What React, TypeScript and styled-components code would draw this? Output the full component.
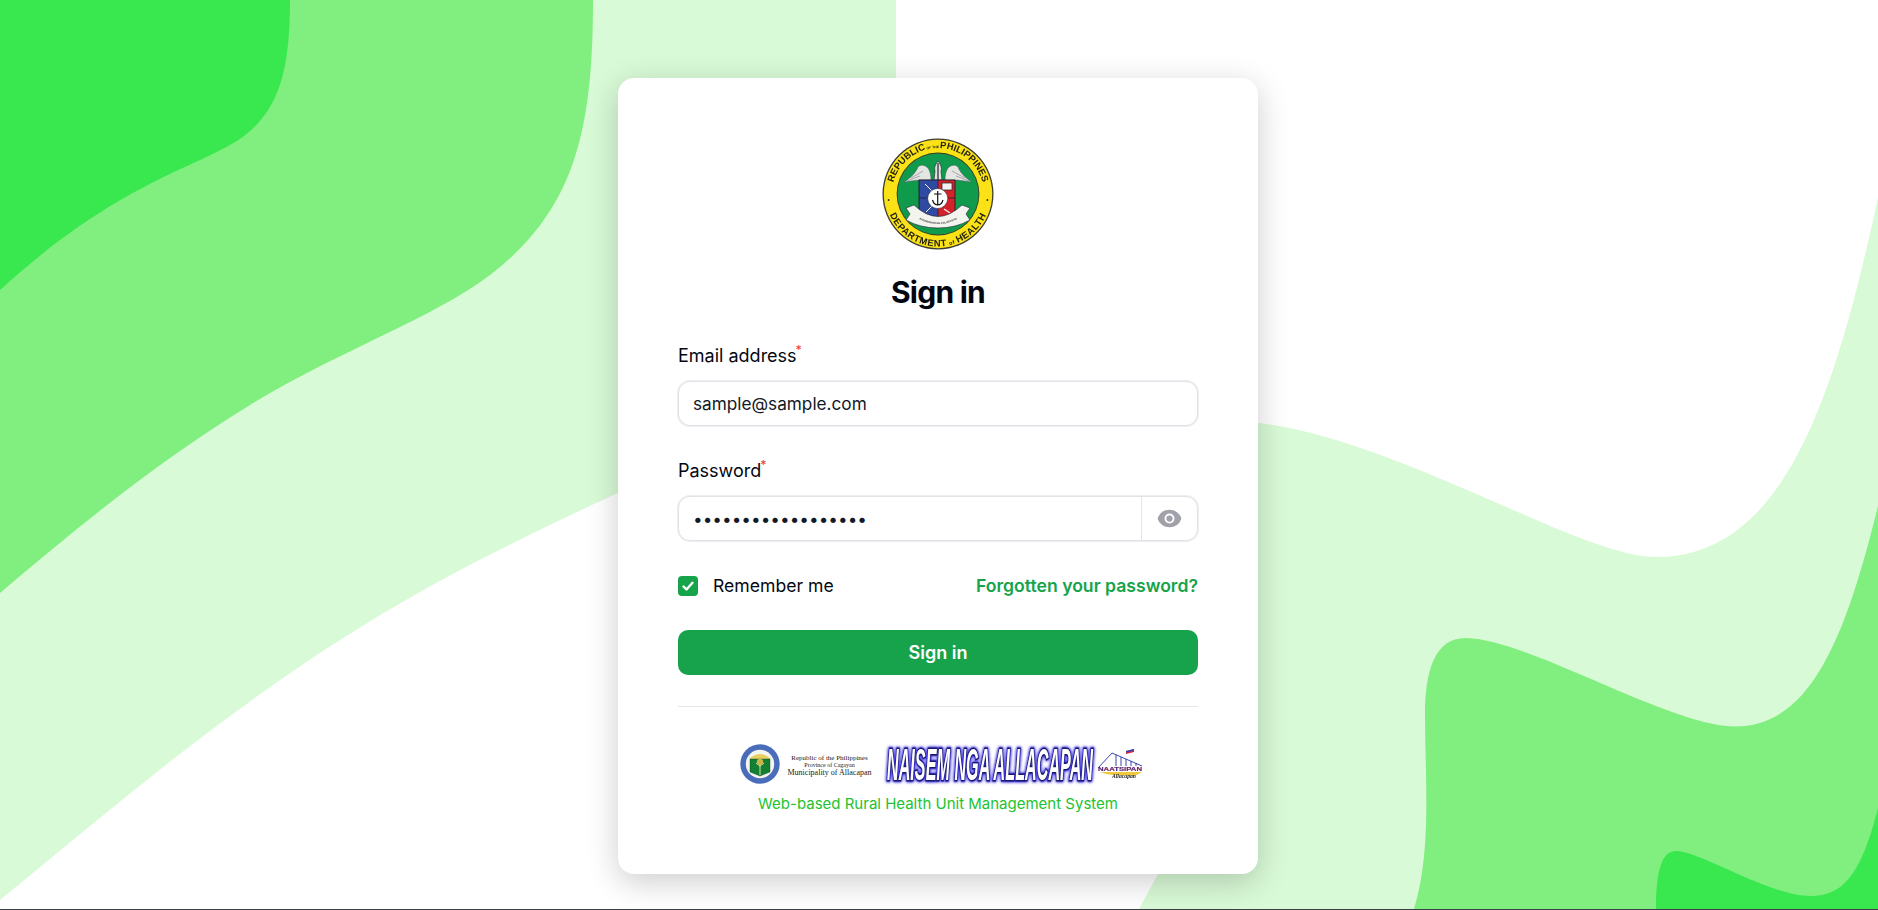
import React from "react";
import styled, { createGlobalStyle } from "styled-components";

const Global = createGlobalStyle`
  html, body { margin: 0; padding: 0; background: #fff; }
  body { font-family: "Inter", "Liberation Sans", sans-serif; color: #030712; }
  * { box-sizing: border-box; }
`;

const Page = styled.div`
  position: relative;
  width: 100%;
  height: 910px;
  overflow: hidden;
  background: #fff;
  border-bottom: 1px solid #3a3f47;
  display: flex;
  justify-content: center;
  align-items: flex-start;
  padding: 78px 2px 0 0;
`;

const Waves = styled.svg`
  position: absolute;
  left: 0;
  top: 0;
  width: 1878px;
  height: 909px;
`;

const Card = styled.form`
  position: relative;
  width: 640px;
  background: #fff;
  border-radius: 16px;
  padding: 60px;
  box-shadow: 0 8px 32px rgba(0, 0, 0, 0.2);
  display: flex;
  flex-direction: column;
`;

const SealBox = styled.svg`
  display: block;
  width: 112px;
  height: 112px;
  margin: 0 auto;
  filter: blur(0.25px);
`;

const Title = styled.h1`
  margin: 24px 0 31.5px;
  font-size: 30px;
  line-height: 36px;
  font-weight: 700;
  letter-spacing: -0.75px;
  text-align: center;
  color: #030712;
`;

const Field = styled.div`
  display: flex;
  flex-direction: column;
  gap: 11.5px;
  margin-bottom: 30.5px;
`;

const Label = styled.label`
  font-size: 18px;
  line-height: 28px;
  font-weight: 400;
  color: #030712;
`;

const Required = styled.sup`
  color: #ef4444;
  font-size: 12px;
  font-weight: 500;
  line-height: 0;
  margin-left: -1px;
  vertical-align: 8px;
`;

const InputBox = styled.div`
  display: flex;
  align-items: stretch;
  height: 45px;
  background: #fff;
  border: 1px solid #e1e3e7;
  box-shadow: 0 0 0 1px #eceef1;
  border-radius: 12px;
  overflow: hidden;
`;

const Input = styled.input`
  flex: 1;
  min-width: 0;
  border: 0;
  outline: 0;
  background: transparent;
  padding: 0 14px;
  font-family: "Inter", "Liberation Sans", sans-serif;
  font-size: 17.2px;
  color: #111827;
`;

const EyeCell = styled.div`
  width: 56px;
  display: flex;
  align-items: center;
  justify-content: center;
  border-left: 1px solid #e3e5e9;
  color: #a1a1aa;
`;

const OptionsRow = styled.div`
  display: flex;
  align-items: center;
  justify-content: space-between;
  margin: 0 0 30px;
  height: 28px;
`;

const Remember = styled.label`
  display: flex;
  align-items: center;
  gap: 15px;
  font-size: 17.6px;
  line-height: 28px;
  color: #030712;
`;

const Check = styled.span`
  width: 20px;
  height: 20px;
  border-radius: 4px;
  background: #16a34a;
  display: flex;
  align-items: center;
  justify-content: center;
`;

const Forgot = styled.a`
  font-size: 17.6px;
  line-height: 28px;
  font-weight: 600;
  color: #16a34a;
  text-decoration: none;
`;

const Submit = styled.button`
  height: 45px;
  width: 100%;
  border: 0;
  border-radius: 10px;
  background: #17a34c;
  color: #fff;
  font-family: "Inter", "Liberation Sans", sans-serif;
  font-size: 18px;
  font-weight: 600;
`;

const Divider = styled.hr`
  width: 100%;
  height: 1px;
  border: 0;
  margin: 31px 0 37px;
  background: #e5e7eb;
`;

const LogoStrip = styled.div`
  display: flex;
  align-items: center;
  justify-content: center;
  padding-left: 7px;
  height: 40px;
`;

const SmallSeal = styled.svg`
  display: block;
  width: 40px;
  height: 40px;
  margin-right: 8px;
  filter: blur(0.3px);
`;

const Municipal = styled.div`
  width: 84px;
  display: flex;
  flex-direction: column;
  align-items: center;
  margin-right: 12px;
  padding-top: 4px;
  font-family: "Liberation Serif", serif;
  color: #222;
`;

const MunicipalLine = styled.span<{ $size: number }>`
  font-size: ${(p) => p.$size}px;
  line-height: 7px;
  white-space: nowrap;
`;

const Naisem = styled.svg`
  display: block;
  width: 212px;
  height: 40px;
  overflow: visible;
  filter: drop-shadow(0 0 1.5px #3b30e0) drop-shadow(0 0 1px #3b30e0);
`;

const Bridge = styled.svg`
  display: block;
  width: 48px;
  height: 40px;
  filter: blur(0.2px);
`;

const Tagline = styled.p`
  margin: 9px 0 0;
  font-family: "Inter", "Open Sans", sans-serif;
  font-size: 15px;
  line-height: 21px;
  text-align: center;
  white-space: nowrap;
  color: #22c32e;
`;

const LIGHT = "#d9fad6";
const MID = "#80ef7f";
const DARK = "#38e84e";

const leftLight = "M0 0L896 0L896 250L700 455L618 493C440 575 340 630 172 760C115 805 55 855 0 900Z";
const leftMid = "M0 0L593 0C593 130 575 210 490 275C430 320 340 350 250 405C160 460 80 525 0 593Z";
const leftDark = "M0 0L290 0C290 75 278 118 230 145C182 172 110 190 0 290Z";

const rightLight = "M1878 198C1835 395 1785 557 1656 557C1580 557 1400 440 1259 423L1100 420L1170 850L1158 874L1139 909L1878 909Z";
const rightMid = "M1878 506C1845 640 1810 726.5 1735 726.5C1670 726.5 1530 640 1467 638C1435 637 1425 670 1425 715C1425 780 1432 850 1414 909L1878 909Z";
const rightDark = "M1878 808C1860 880 1840 896 1810 896C1770 896 1700 851 1676 851C1662 851 1656 870 1656 909L1878 909Z";

function DohSeal() {
  return (
    <SealBox viewBox="0 0 112 112" role="img" aria-label="Department of Health seal">
      <defs>
        <path id="doh-top" d="M11.1 66A46 46 0 1 1 100.9 66" />
        <path id="doh-bottom" d="M3.84 50A52.5 52.5 0 1 0 108.16 50" />
        <path id="doh-ribbon" d="M26 74Q56 98 86 74" />
      </defs>
      <circle cx="56" cy="56" r="55.5" fill="#3c3c32" />
      <circle cx="56" cy="56" r="54.2" fill="#fbe216" />
      <circle cx="56" cy="56" r="41.4" fill="#3c3c20" />
      <circle cx="56" cy="56" r="40.5" fill="#0f9a4c" />
      <text fontFamily="Liberation Sans, sans-serif" fontWeight="700" fontSize="9.4" fill="#23230f" textAnchor="middle">
        <textPath href="#doh-top" startOffset="50%">
          REPUBLIC<tspan fontSize="3.4"> OF THE </tspan>PHILIPPINES
        </textPath>
      </text>
      <text fontFamily="Liberation Sans, sans-serif" fontWeight="700" fontSize="9.4" letterSpacing="0.6" fill="#23230f" textAnchor="middle">
        <textPath href="#doh-bottom" startOffset="50%">
          DEPARTMENT<tspan fontSize="5.5"> of </tspan>HEALTH
        </textPath>
      </text>
      <circle cx="6.6" cy="62" r="0.9" fill="#23230f" />
      <circle cx="105.4" cy="62" r="0.9" fill="#23230f" />

      {/* wings */}
      <path d="M22 44C30 39 34 34 36 29C39 26 43 27 46 30C48 33 49 37 49 42L37 42Z" fill="#e4e6e2" stroke="#556" strokeWidth="0.5" />
      <path d="M90 44C82 39 78 34 76 29C73 26 69 27 66 30C64 33 63 37 63 42L75 42Z" fill="#e4e6e2" stroke="#556" strokeWidth="0.5" />
      <path d="M25 43L38 38M29 40L41 33M70 33L83 40M74 38L87 43" stroke="#667" strokeWidth="0.5" />
      {/* caduceus */}
      <path d="M56 23C53 27 52 30 53 33L52 42H60L59 33C60 30 59 27 56 23Z" fill="#dfe3dc" stroke="#334" strokeWidth="0.7" />
      <path d="M56 25V42" stroke="#223" strokeWidth="1.2" />

      {/* shield */}
      <path d="M37 42H56V79H40Q37 79 37 76Z" fill="#2f4aa0" />
      <path d="M56 42H73V76Q73 79 70 79H56Z" fill="#d3232a" />
      <path d="M37 60H73M56 42V79" stroke="#1b1b2a" strokeWidth="0.7" />
      <path d="M37 42H73V76Q73 79 70 79H40Q37 79 37 76Z" fill="none" stroke="#1b1b2a" strokeWidth="0.9" />
      <path d="M43 46L50 53M44 74L50 68" stroke="#f3f3f3" strokeWidth="1" />
      <rect x="60" y="45" width="10" height="7" fill="#f2f2f2" stroke="#222" strokeWidth="0.7" />
      <path d="M62 71L68 75" stroke="#f2f2f2" strokeWidth="1.4" />

      {/* centre */}
      <circle cx="55.7" cy="60.5" r="10" fill="#fff" stroke="#222" strokeWidth="0.5" />
      <path d="M55.7 53V67M52 56H59.5M50.5 62Q52 67 55.7 67Q59.5 67 61 62" fill="none" stroke="#111" strokeWidth="1.2" />

      {/* ribbon */}
      <path d="M24 70L32 67Q56 90 80 67L88 70L84 76L88 82Q74 90 56 90Q38 90 24 82L28 76Z" fill="#f4f4ef" stroke="#223" strokeWidth="0.6" />
      <text fontFamily="Liberation Sans, sans-serif" fontWeight="700" fontSize="2.6" fill="#333" textAnchor="middle">
        <textPath href="#doh-ribbon" startOffset="50%">KAGAWARAN NG KALUSUGAN</textPath>
      </text>
    </SealBox>
  );
}

function MunicipalSeal() {
  return (
    <SmallSeal viewBox="0 0 40 40" role="img" aria-label="Municipality of Allacapan seal">
      <circle cx="20" cy="20" r="19.7" fill="#4a6dbb" />
      <circle cx="20" cy="20" r="14.2" fill="#f4f5ef" />
      <path d="M9 15Q20 5 31 15Z" fill="#e8cf63" />
      <path d="M10 15H30V28L20 32L10 28Z" fill="#127f33" stroke="#0a4a1e" strokeWidth="0.4" />
      <path d="M20 31V20M20 22L16 19M20 22L24 19" stroke="#d3e6a2" strokeWidth="1" />
      <circle cx="20" cy="18" r="3.2" fill="#c9b54a" />
    </SmallSeal>
  );
}

function BridgeLogo() {
  return (
    <Bridge viewBox="0 0 48 40" role="img" aria-label="Allacapan logo">
      <path d="M2 24L16 9L46 22M20 11V22M25 13V22M30 15V22M35 17V22M40 19V22" fill="none" stroke="#2531a8" strokeWidth="0.9" />
      <path d="M30 7L38 5V8L30 10Z" fill="#d6263a" />
      <path d="M30 7L38 5V6.5L30 8.5Z" fill="#2a45c0" />
      <text x="24" y="27" fontFamily="Liberation Sans, sans-serif" fontWeight="700" fontSize="6" fill="#24309e" stroke="#c8202a" strokeWidth="0.2" textAnchor="middle" textLength="44" lengthAdjust="spacingAndGlyphs">NAATSIPAN</text>
      <path d="M4 28H46Q40 33 30 31Q14 32 4 28Z" fill="#efc93a" />
      <text x="28" y="34" fontFamily="Liberation Serif, serif" fontStyle="italic" fontWeight="700" fontSize="6.5" fill="#1c1c1c" textAnchor="middle" textLength="24" lengthAdjust="spacingAndGlyphs">Allacapan</text>
    </Bridge>
  );
}

export default function App() {
  return (
    <>
      <Global />
      <Page>
        <Waves viewBox="0 0 1878 909" aria-hidden="true">
          <path d={leftLight} fill={LIGHT} />
          <path d={rightLight} fill={LIGHT} />
          <path d={leftMid} fill={MID} />
          <path d={rightMid} fill={MID} />
          <path d={leftDark} fill={DARK} />
          <path d={rightDark} fill={DARK} />
        </Waves>
        <Card onSubmit={(e) => e.preventDefault()}>
          <DohSeal />
          <Title>Sign in</Title>
          <Field>
            <Label htmlFor="email">
              Email address<Required>*</Required>
            </Label>
            <InputBox>
              <Input id="email" type="email" defaultValue="sample@sample.com" />
            </InputBox>
          </Field>
          <Field>
            <Label htmlFor="password">
              Password<Required>*</Required>
            </Label>
            <InputBox>
              <Input id="password" type="password" defaultValue="samplepassword1234" />
              <EyeCell>
                <svg width="25" height="25" viewBox="0 0 20 20" fill="currentColor" aria-hidden="true">
                  <path d="M10 12.5a2.5 2.5 0 100-5 2.5 2.5 0 000 5z" />
                  <path fillRule="evenodd" clipRule="evenodd" d="M.664 10.59a1.651 1.651 0 010-1.186A10.004 10.004 0 0110 3c4.257 0 7.893 2.66 9.336 6.41.147.381.146.804 0 1.186A10.004 10.004 0 0110 17c-4.257 0-7.893-2.66-9.336-6.41zM14 10a4 4 0 11-8 0 4 4 0 018 0z" />
                </svg>
              </EyeCell>
            </InputBox>
          </Field>
          <OptionsRow>
            <Remember>
              <Check>
                <svg width="14" height="14" viewBox="0 0 14 14" fill="none" aria-hidden="true">
                  <path d="M2.5 7.5L5.5 10.5L11.5 3.8" stroke="#fff" strokeWidth="2.4" strokeLinecap="round" strokeLinejoin="round" />
                </svg>
              </Check>
              Remember me
            </Remember>
            <Forgot href="#">Forgotten your password?</Forgot>
          </OptionsRow>
          <Submit type="submit">Sign in</Submit>
          <Divider />
          <LogoStrip>
            <MunicipalSeal />
            <Municipal>
              <MunicipalLine $size={7}>Republic of the Philippines</MunicipalLine>
              <MunicipalLine $size={6}>Province of Cagayan</MunicipalLine>
              <MunicipalLine $size={8}>Municipality of Allacapan</MunicipalLine>
            </Municipal>
            <Naisem viewBox="0 0 212 40" role="img" aria-label="Naisem nga Allacapan">
              <text
                x="106"
                y="36"
                fontFamily="Liberation Sans, sans-serif"
                fontStyle="italic"
                fontWeight="700"
                fontSize="45"
                fill="#fff"
                stroke="#17176b"
                strokeWidth="3.2"
                paintOrder="stroke"
                textAnchor="middle"
                textLength="206"
                lengthAdjust="spacingAndGlyphs"
              >
                NAISEM NGA ALLACAPAN
              </text>
            </Naisem>
            <BridgeLogo />
          </LogoStrip>
          <Tagline>Web-based Rural Health Unit Management System</Tagline>
        </Card>
      </Page>
    </>
  );
}
